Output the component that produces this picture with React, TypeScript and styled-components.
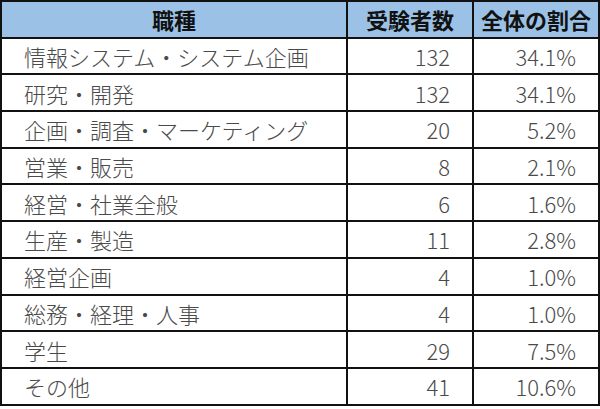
import React from "react";
import styled, { createGlobalStyle } from "styled-components";

const Global = createGlobalStyle`
  html, body { margin: 0; padding: 0; background: #ffffff; }
  body { font-family: "Noto Sans CJK JP", "Noto Sans", sans-serif; }
`;

const Table = styled.table`
  border-collapse: collapse;
  width: 598px;
  table-layout: fixed;
  margin: 0;
`;

const Row = styled.tr`
  height: 36.7px;
`;

const HeadCell = styled.th`
  background: #9bc2e6;
  border: 2px solid #111111;
  color: #111111;
  font-weight: 700;
  font-size: 22px;
  text-align: center;
  padding: 0;
  line-height: 1;
`;

const Cell = styled.td<{ $align?: "left" | "right" }>`
  border: 2px solid #111111;
  color: #4a4a4a;
  font-size: 22px;
  font-weight: 300;
  line-height: 1;
  padding: ${(p) => (p.$align === "right" ? "0 22px 0 0" : "0 0 0 22px")};
  text-align: ${(p) => p.$align ?? "left"};
  white-space: nowrap;
`;

const rows: [string, number, string][] = [
  ["情報システム・システム企画", 132, "34.1%"],
  ["研究・開発", 132, "34.1%"],
  ["企画・調査・マーケティング", 20, "5.2%"],
  ["営業・販売", 8, "2.1%"],
  ["経営・社業全般", 6, "1.6%"],
  ["生産・製造", 11, "2.8%"],
  ["経営企画", 4, "1.0%"],
  ["総務・経理・人事", 4, "1.0%"],
  ["学生", 29, "7.5%"],
  ["その他", 41, "10.6%"],
];

export default function App() {
  return (
    <>
      <Global />
      <Table>
        <colgroup>
          <col style={{ width: 346 }} />
          <col style={{ width: 126 }} />
          <col style={{ width: 126 }} />
        </colgroup>
        <thead>
          <Row>
            <HeadCell>職種</HeadCell>
            <HeadCell>受験者数</HeadCell>
            <HeadCell>全体の割合</HeadCell>
          </Row>
        </thead>
        <tbody>
          {rows.map(([job, n, pct]) => (
            <Row key={job}>
              <Cell>{job}</Cell>
              <Cell $align="right">{n}</Cell>
              <Cell $align="right">{pct}</Cell>
            </Row>
          ))}
        </tbody>
      </Table>
    </>
  );
}
